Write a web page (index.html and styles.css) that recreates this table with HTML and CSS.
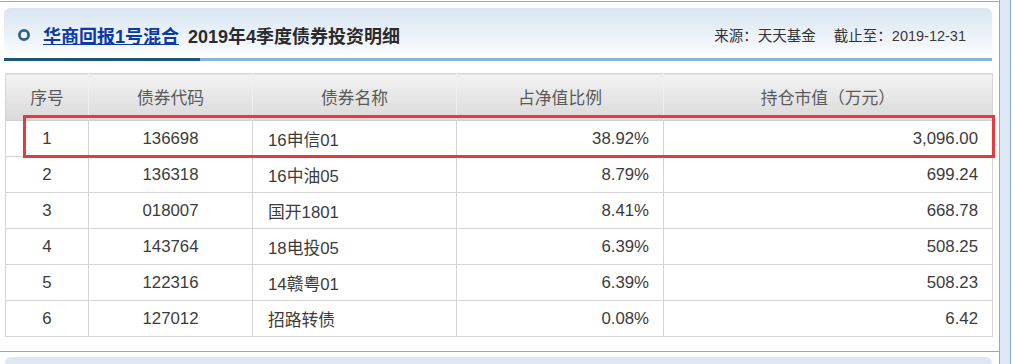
FILE: index.html
```html
<!DOCTYPE html>
<html lang="zh-CN">
<head>
<meta charset="utf-8">
<title>华商回报1号混合 债券投资明细</title>
<link rel="stylesheet" href="styles.css">
</head>
<body>
<div class="page">
  <div class="main">
    <div class="panel-head">
      <div class="title">
        <svg class="ring" width="14" height="14" viewBox="0 0 14 14"><circle cx="7" cy="7" r="4.6" fill="none" stroke="#2f6286" stroke-width="2.8"/></svg>
        <a class="fund-link" href="#">华商回报1号混合</a>
        <span class="title-text">2019年4季度债券投资明细</span>
      </div>
      <div class="source">来源：天天基金<span class="gap"></span>截止至：<span class="date">2019-12-31</span></div>
    </div>
    <div class="table-wrap">
      <table class="bonds">
        <colgroup>
          <col class="c1"><col class="c2"><col class="c3"><col class="c4"><col class="c5">
        </colgroup>
        <thead>
          <tr><th>序号</th><th>债券代码</th><th>债券名称</th><th>占净值比例</th><th>持仓市值（万元）</th></tr>
        </thead>
        <tbody>
          <tr><td class="ctr">1</td><td class="ctr">136698</td><td class="name">16申信01</td><td class="num">38.92%</td><td class="num">3,096.00</td></tr>
          <tr><td class="ctr">2</td><td class="ctr">136318</td><td class="name">16中油05</td><td class="num">8.79%</td><td class="num">699.24</td></tr>
          <tr><td class="ctr">3</td><td class="ctr">018007</td><td class="name">国开1801</td><td class="num">8.41%</td><td class="num">668.78</td></tr>
          <tr><td class="ctr">4</td><td class="ctr">143764</td><td class="name">18电投05</td><td class="num">6.39%</td><td class="num">508.25</td></tr>
          <tr><td class="ctr">5</td><td class="ctr">122316</td><td class="name">14赣粤01</td><td class="num">6.39%</td><td class="num">508.23</td></tr>
          <tr><td class="ctr">6</td><td class="ctr">127012</td><td class="name">招路转债</td><td class="num">0.08%</td><td class="num">6.42</td></tr>
        </tbody>
      </table>
      <div class="highlight"></div>
    </div>
    <div class="next">
      <div class="next-head"></div>
    </div>
  </div>
  <div class="strip"></div>
</div>
</body>
</html>
```
FILE: styles.css
```css
html, body {
  margin: 0;
  padding: 0;
  background: #ffffff;
}
body {
  font-family: "Liberation Sans", "Noto Sans CJK SC", sans-serif;
  color: #333333;
  overflow: hidden;
}
.page {
  display: flex;
  height: 364px;
  padding-top: 1px;
  box-sizing: border-box;
}
.main {
  width: 999px;
  border-top: 1px solid #86adc6;
}
.strip {
  width: 10px;
  margin-top: -1px;
  border-left: 1px solid #86adc6;
  border-right: 1px solid #86adc6;
  background: #dde8f4;
}
.panel-head {
  position: relative;
  margin: 6px 7px 0 4px;
  height: 50px;
  border-bottom: 3px solid #8ab6d2;
  border-radius: 6px 6px 0 0;
  background: linear-gradient(#d9e5f2, #f3f7fb 75%, #ffffff);
  display: flex;
  align-items: center;
  justify-content: space-between;
  padding: 0 26px 0 13px;
}
.panel-head::after {
  content: "";
  position: absolute;
  left: 0;
  bottom: -3px;
  width: 196px;
  height: 3px;
  background: #1b5677;
}
.title {
  display: flex;
  align-items: center;
  gap: 9px;
  padding-top: 4px;
}
.ring {
  display: block;
  margin-right: 3px;
}
.fund-link {
  color: #0a39a8;
  font-size: 18px;
  font-weight: bold;
  text-decoration: underline;
}
.title-text {
  color: #2b2b2b;
  font-size: 18px;
  font-weight: bold;
}
.source {
  font-size: 14.5px;
  color: #333333;
  padding-top: 2px;
}
.gap {
  display: inline-block;
  width: 18px;
}
.date {
  color: #3a3a3a;
}
.table-wrap {
  position: relative;
  margin: 12px 7px 0 5px;
}
.bonds {
  width: 987px;
  table-layout: fixed;
  border-collapse: collapse;
  border: 1px solid #d4d4d4;
  font-size: 16.8px;
}
.c1 { width: 83px; }
.c2 { width: 164px; }
.c3 { width: 204px; }
.c4 { width: 207px; }
.c5 { width: 329px; }
.bonds th {
  height: 46px;
  padding: 0;
  font-weight: normal;
  color: #5a5a5a;
  background: linear-gradient(#f3f3f3, #d9d9d9);
  border-left: 1px solid #f0f0f0;
  border-bottom: 1px solid #cfcfcf;
  text-align: center;
}
.bonds th:first-child {
  border-left: 1px solid #d4d4d4;
}
.bonds td {
  height: 35px;
  padding: 0 14px;
  border: 1px solid #d4d4d4;
  color: #3b3b3b;
}
.bonds td.ctr { text-align: center; }
.bonds td.name { text-align: left; padding-left: 15px; }
.bonds td.num { text-align: right; }
.highlight {
  position: absolute;
  left: 18px;
  top: 42px;
  width: 972px;
  height: 43px;
  box-sizing: border-box;
  border: 3px solid #e8393e;
  pointer-events: none;
}
.next {
  margin-top: 14px;
  border-top: 1px solid #86adc6;
  padding-top: 5px;
}
.next-head {
  margin: 0 7px 0 5px;
  height: 20px;
  border-radius: 6px 6px 0 0;
  background: #dee8f4;
}
```
